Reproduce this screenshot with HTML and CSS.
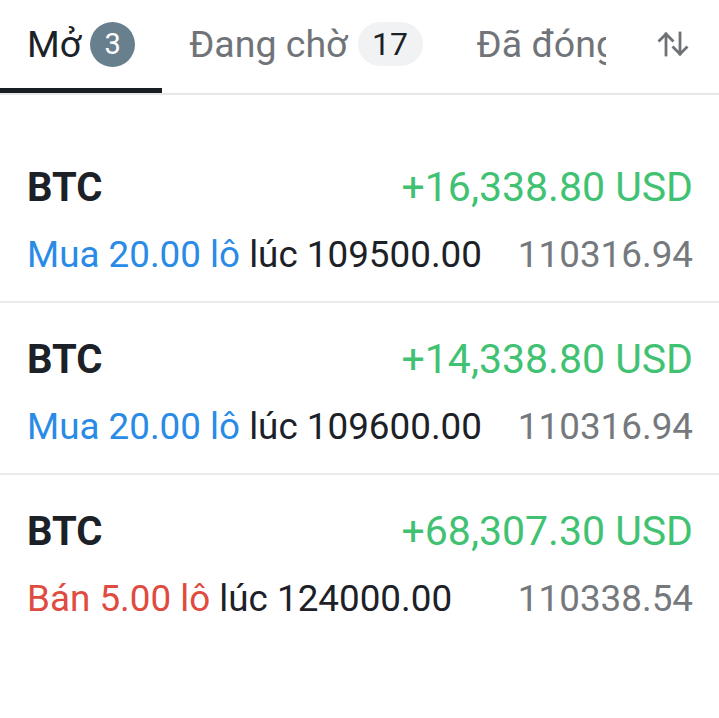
FILE: index.html
```html
<!DOCTYPE html>
<html lang="vi">
<head>
<meta charset="utf-8">
<title>Lệnh</title>
<link rel="stylesheet" href="styles.css">
</head>
<body>
<div class="tabbar">
  <div class="tabs">
    <div class="tab active"><span class="label">Mở</span><span class="badge dark">3</span></div>
    <div class="tab"><span class="label">Đang chờ</span><span class="badge light">17</span></div>
    <div class="tab"><span class="label">Đã đóng</span></div>
  </div>
  <div class="sort">
    <svg class="sort-icon" width="32" height="26" viewBox="0 0 32 26" aria-hidden="true">
      <g fill="none" stroke="#6e7276" stroke-width="2.8" stroke-linecap="square" stroke-linejoin="miter">
        <path d="M9 3v21"/>
        <path d="M2.5 9.5L9 3l6.5 6.5"/>
        <path d="M23 2v21"/>
        <path d="M16.5 16.5L23 23l6.5-6.5"/>
      </g>
    </svg>
  </div>
</div>

<div class="list">
  <div class="row">
    <div class="line top">
      <span class="symbol">BTC</span>
      <span class="pnl">+16,338.80 USD</span>
    </div>
    <div class="line bottom">
      <span class="desc"><span class="buy">Mua 20.00 lô</span> lúc 109500.00</span>
      <span class="price">110316.94</span>
    </div>
  </div>
  <div class="row">
    <div class="line top">
      <span class="symbol">BTC</span>
      <span class="pnl">+14,338.80 USD</span>
    </div>
    <div class="line bottom">
      <span class="desc"><span class="buy">Mua 20.00 lô</span> lúc 109600.00</span>
      <span class="price">110316.94</span>
    </div>
  </div>
  <div class="row">
    <div class="line top">
      <span class="symbol">BTC</span>
      <span class="pnl">+68,307.30 USD</span>
    </div>
    <div class="line bottom">
      <span class="desc"><span class="sell">Bán 5.00 lô</span> lúc 124000.00</span>
      <span class="price">110338.54</span>
    </div>
  </div>
</div>
</body>
</html>
```
FILE: styles.css
```css
* { box-sizing: border-box; }

html, body {
  margin: 0;
  padding: 0;
  background: #ffffff;
}

body {
  font-family: Roboto, "Noto Sans", sans-serif;
  color: #1c2127;
}

.tabbar {
  display: flex;
  align-items: stretch;
  border-bottom: 2px solid #e6e7e8;
  height: 95px;
}

.tabs {
  display: flex;
  width: 606px;
  overflow: hidden;
  flex-shrink: 0;
}

.tab {
  display: flex;
  align-items: center;
  flex-shrink: 0;
  padding: 0 27px;
  height: 93px;
  border-bottom: 5px solid transparent;
  white-space: nowrap;
}

.tab.active {
  border-bottom-color: #1a1f24;
}

.label {
  font-size: 37.5px;
  color: #707478;
}

.tab.active .label {
  color: #1c2127;
}

.badge {
  margin-left: 9px;
  display: flex;
  align-items: center;
  justify-content: center;
  height: 45px;
}

.badge.dark {
  width: 45px;
  border-radius: 50%;
  background: #687f8e;
  color: #ffffff;
  font-size: 29px;
}

.badge.light {
  margin-left: 10px;
  width: 65px;
  height: 44px;
  border-radius: 22px;
  background: #f0f2f4;
  color: #1c2127;
  font-size: 32px;
}

.sort {
  flex: 1;
  display: flex;
  align-items: center;
  padding-left: 51px;
  padding-bottom: 6px;
}

.sort-icon {
  display: block;
}

.list {
  padding-top: 36px;
}

.row {
  padding: 32px 26px 25px 27px;
  border-bottom: 2px solid #ebebec;
}

.row:last-child {
  border-bottom: none;
}

.line {
  display: flex;
  justify-content: space-between;
  align-items: baseline;
  white-space: nowrap;
}

.line.top {
  font-size: 41px;
}

.line.bottom {
  font-size: 36.8px;
  margin-top: 22px;
}

.symbol {
  font-weight: 700;
  font-size: 40px;
  color: #1c2127;
}

.pnl {
  color: #41c272;
}

.desc {
  color: #1c2127;
}

.buy {
  color: #2a8be6;
}

.sell {
  color: #e04b40;
}

.price {
  color: #75797d;
}
```
